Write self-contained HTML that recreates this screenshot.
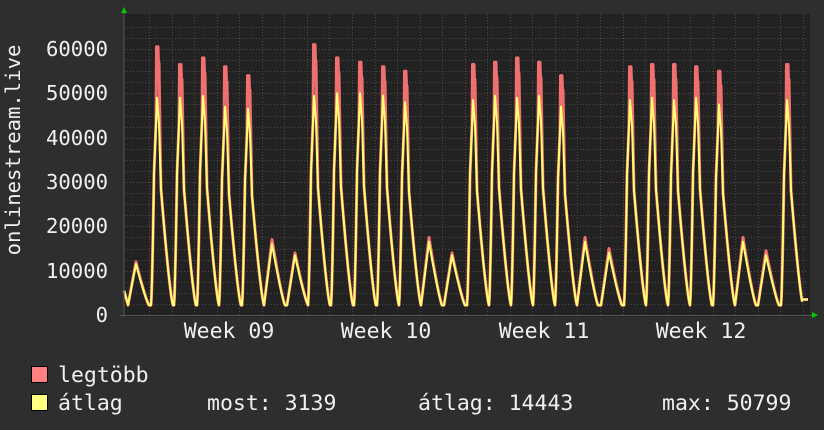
<!DOCTYPE html>
<html><head><meta charset="utf-8"><style>
html,body{margin:0;padding:0;background:#2e2e2e;}
svg{display:block;}
text{font-family:"DejaVu Sans Mono","Liberation Mono",monospace;fill:#f0f0f0;font-size:21.5px;}
text.y{font-size:20.6px;}
</style></head><body>
<svg id="s" width="824" height="430" xmlns="http://www.w3.org/2000/svg">
<rect width="824" height="430" fill="#2e2e2e"/>
<rect x="124" y="14" width="686" height="303" fill="#222"/>
<g id="grid"></g>
<path id="red" fill="none" stroke="#f07070" stroke-width="3" stroke-linejoin="round"/>
<path id="yel" fill="none" stroke="#ffff70" stroke-width="2" stroke-linejoin="round"/>
<line x1="124" y1="10" x2="124" y2="317" stroke="#555" stroke-width="1"/>
<line x1="120" y1="315.5" x2="812" y2="315.5" stroke="#555" stroke-width="1"/>
<polygon points="121,13 127,13 124,7" fill="#0c0"/>
<polygon points="812,312 812,318 818,315" fill="#0c0"/>
<g text-anchor="end">
<text class="y" x="108" y="56">60000</text>
<text class="y" x="108" y="100">50000</text>
<text class="y" x="108" y="145">40000</text>
<text class="y" x="108" y="189">30000</text>
<text class="y" x="108" y="233">20000</text>
<text class="y" x="108" y="278">10000</text>
<text class="y" x="108" y="322">0</text>
</g>
<g text-anchor="middle">
<text x="229" y="338">Week 09</text>
<text x="386" y="338">Week 10</text>
<text x="544" y="338">Week 11</text>
<text x="701" y="338">Week 12</text>
</g>
<text class="y" transform="translate(20,150) rotate(-90)" text-anchor="middle">onlinestream.live</text>
<rect x="31.5" y="366.5" width="16" height="16" fill="#ff8080" stroke="#000"/>
<rect x="31.5" y="394.5" width="16" height="16" fill="#ffff80" stroke="#000"/>
<text x="58" y="382">legtöbb</text>
<text x="58" y="410">átlag</text>
<text x="207" y="410">most: 3139</text>
<text x="418" y="410">átlag: 14443</text>
<text x="662" y="410">max: 50799</text>
</svg>
<script>
(function(){
var NS="http://www.w3.org/2000/svg",g=document.getElementById('grid');
function Y(v){return 315-v*266/60000;}
function ln(x1,y1,x2,y2,c){var l=document.createElementNS(NS,'line');l.setAttribute('x1',x1);l.setAttribute('y1',y1);l.setAttribute('x2',x2);l.setAttribute('y2',y2);l.setAttribute('stroke',c);l.setAttribute('stroke-dasharray','1,2');g.appendChild(l);}
for(var v=2500;v<=65000;v+=2500){var y=Math.round(Y(v))+0.5;ln(124,y,808,y,v%10000==0?'#6a4545':'#484848');}
for(var k=0;k<31;k++){var x=Math.round(149+22.55*k)+0.5;ln(x,14,x,317,(k%7==0)?'#6a4545':'#484848');}
var P=[[136,12,11.5,1],[157,60.5,49,0],[180,56.5,49,0],[203,58,49.5,0],[225,56,47,0],[248,54,46.5,0],[272,17,16,1],[295,14,13.5,1],[314,61,49.5,0],[337,58,50,0],[360,57,50,0],[383,56,49.5,0],[405,55,48,0],[429,17.5,16.5,1],[452,14,13.5,1],[473,56.5,48.5,0],[495,57,49.5,0],[517,58,49,0],[539,57,49.5,0],[561,54,47,0],[585,17.5,16.5,1],[609,15,14,1],[630,56,48.5,0],[652,56.5,49,0],[674,56.5,48.5,0],[696,56,49,0],[719,55,47.5,0],[743,17.5,16.5,1],[766,14.5,13.5,1],[787,56.5,48.5,0]];
function val(x,red){var b=2200,best=b;for(var i=0;i<P.length;i++){var p=P[i],dx=x-p[0],Mr=p[1]*1000,M=p[2]*1000,v=b;
if(p[3]){var m=red?Mr:M;if(dx>=-8&&dx<=0)v=b+(m-b)*(dx+8)/8;else if(dx>0&&dx<=13)v=b+(m-b)*Math.pow(1-dx/13,1.2);}
else{
if(dx>=-6&&dx<-3)v=b+(0.65*M-b)*Math.pow((dx+6)/3,1.5);
else if(dx>=-3&&dx<0)v=0.65*M+(M-0.65*M)*(dx+3)/3;
else if(dx>=0&&dx<=2)v=M-0.12*M*dx/2;
else if(dx>2&&dx<=4)v=0.88*M-(0.88*M-0.58*M)*(dx-2)/2;
else if(dx>4&&dx<=16)v=b+(0.58*M-b)*Math.pow(1-(dx-4)/12,1.3);
if(red){if(dx>=-0.5&&dx<=1)v=Mr;else if(dx>1&&dx<=2)v=0.94*Mr;else if(dx>2&&dx<=3.5)v=Math.max(v,0.94*Mr-(0.94*Mr-0.7*M)*(dx-2)/1.5);}
}
if(v>best)best=v;}
if(x<128)best=5500-(x-124)*800;if(x>802)best=3500;return best;}
function path(red){var d='';for(var x=124;x<=808;x+=0.5){d+=(x==124?'M':'L')+x+','+Y(val(x,red)).toFixed(1);}return d;}
document.getElementById('red').setAttribute('d',path(true));
document.getElementById('yel').setAttribute('d',path(false));
})();
</script>
</body></html>
